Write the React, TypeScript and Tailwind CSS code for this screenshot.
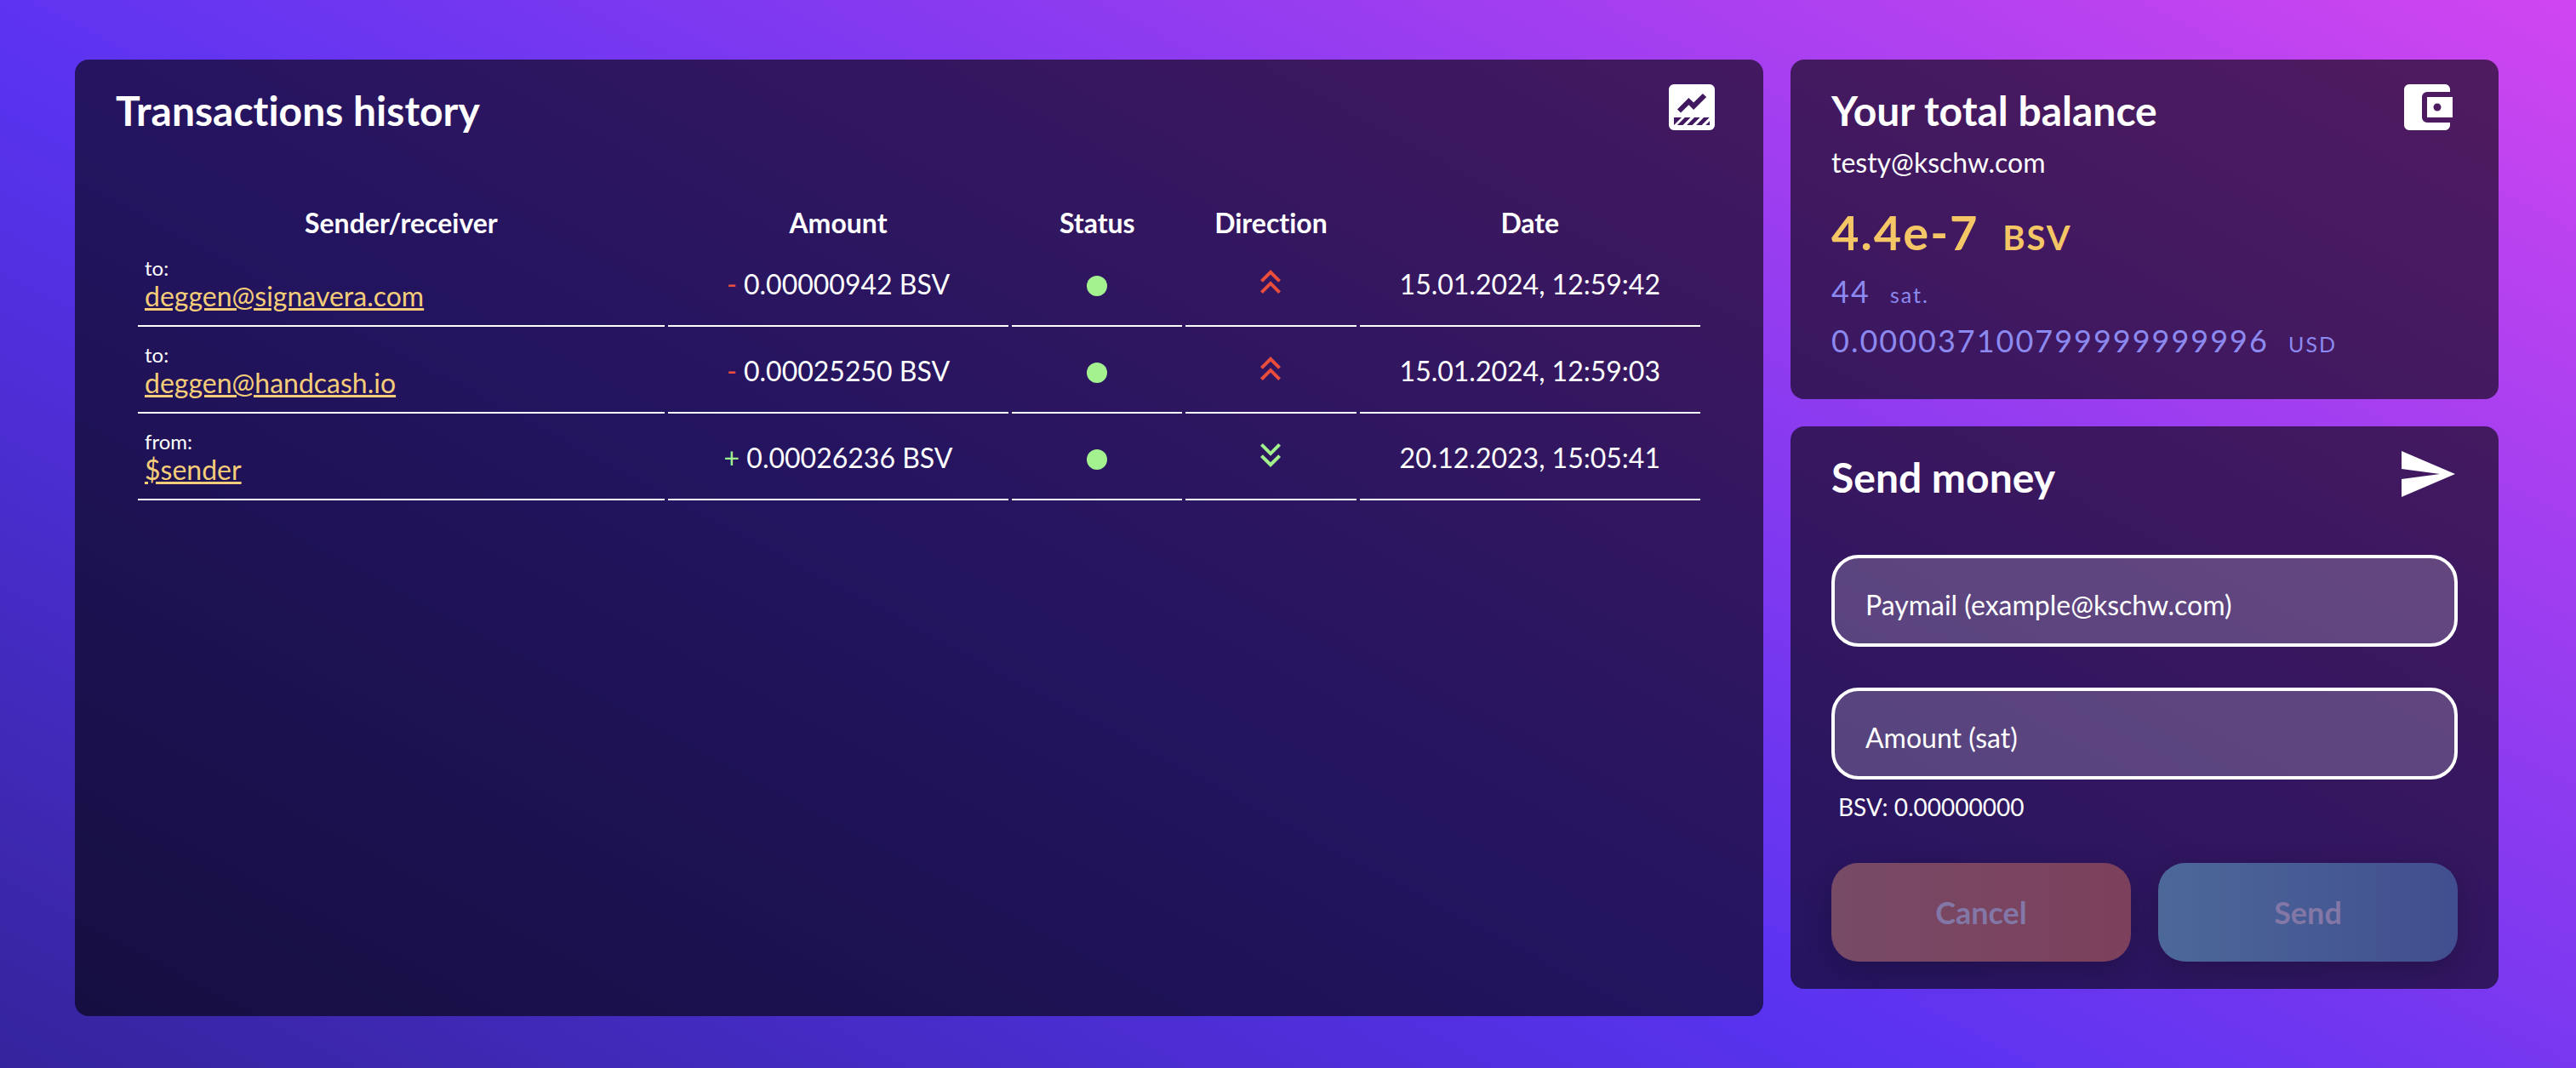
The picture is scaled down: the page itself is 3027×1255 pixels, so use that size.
import type { ReactNode } from "react";
import {
  MdAccountBalanceWallet,
  MdKeyboardDoubleArrowDown,
  MdKeyboardDoubleArrowUp,
} from "react-icons/md";

type Transaction = {
  kind: "to" | "from";
  party: string;
  amount: string;
  date: string;
};

const transactions: Transaction[] = [
  { kind: "to", party: "deggen@signavera.com", amount: "0.00000942", date: "15.01.2024, 12:59:42" },
  { kind: "to", party: "deggen@handcash.io", amount: "0.00025250", date: "15.01.2024, 12:59:03" },
  { kind: "from", party: "$sender", amount: "0.00026236", date: "20.12.2023, 15:05:41" },
];

function ChartIcon() {
  return (
    <svg viewBox="0 0 24 24" className="size-[72px]" fill="currentColor" aria-hidden="true">
      <path
        fillRule="evenodd"
        d="M5 3h14a2 2 0 0 1 2 2v14a2 2 0 0 1-2 2H5a2 2 0 0 1-2-2V5a2 2 0 0 1 2-2z
           M6.3 12.8l4.5-4.5 1.9 1.9 3.6-3.5 1.4 1.3-5 5-1.9-1.9-3.1 3.1z
           M5 16h3L5 19z
           M9.3 16h2.2l-3 3H6.3z
           M13 16h2.2l-3 3H10z
           M16.7 16h2.2l-3 3h-2.2z
           M19 17.4V19h-1.6z"
      />
    </svg>
  );
}

function SendIcon() {
  return (
    <svg viewBox="0 0 24 24" className="size-[72px]" fill="currentColor" aria-hidden="true">
      <path d="M2 3l21 9-21 9v-7l15-2-15-2z" />
    </svg>
  );
}

function Panel({
  title,
  icon,
  className,
  children,
}: {
  title: string;
  icon: ReactNode;
  className: string;
  children: ReactNode;
}) {
  return (
    <section className={`rounded-2xl bg-black/60 px-12 pt-5 ${className}`}>
      <header className="flex h-[78px] items-start justify-between">
        <h2 className="pt-3 text-[48px] leading-[56px] font-bold">{title}</h2>
        {icon}
      </header>
      {children}
    </section>
  );
}

function Field({ label, type }: { label: string; type: string }) {
  return (
    <input
      type={type}
      aria-label={label}
      placeholder={label}
      className="block h-[108px] w-full rounded-[32px] border-4 border-white bg-white/20 px-9 pt-2 text-[32px] text-white placeholder:text-white"
    />
  );
}

function TransactionRow({ tx }: { tx: Transaction }) {
  const outgoing = tx.kind === "to";
  const cell = "border-b-2 border-white p-0 text-center";
  return (
    <tr className="h-[98px]">
      <td className="border-b-2 border-white px-2 pb-4 text-left align-bottom">
        <div className="text-[24px] leading-[30px]">{tx.kind}:</div>
        <a href="#" className="block text-[32px] leading-[36px] text-[#f5cd79] underline">
          {tx.party}
        </a>
      </td>
      <td className={cell}>
        <span className={outgoing ? "text-[#eb4d3d]" : "text-[#a0f08c]"}>{outgoing ? "-" : "+"}</span>{" "}
        {tx.amount} BSV
      </td>
      <td className={cell}>
        <span className="mx-auto mt-1 block size-6 rounded-full bg-[#a3f28f]" role="img" aria-label="Confirmed" />
      </td>
      <td className={cell}>
        {outgoing ? (
          <MdKeyboardDoubleArrowUp className="mx-auto mb-1.5 size-12 text-[#eb4d3d]" />
        ) : (
          <MdKeyboardDoubleArrowDown className="mx-auto mb-1.5 size-12 text-[#a0f08c]" />
        )}
      </td>
      <td className={cell}>{tx.date}</td>
    </tr>
  );
}

export default function App() {
  return (
    <main className="grid min-h-screen grid-cols-[31fr_13fr] items-start gap-8 bg-[linear-gradient(28deg,#34249c_0%,#5933f0_41%,#d046f0_100%)] pt-[70px] pr-[91px] pb-[61px] pl-[88px] font-[Lato,sans-serif] text-white [font-variant-ligatures:none]">
      <Panel title="Transactions history" icon={<ChartIcon />} className="self-stretch">
        <div className="mt-[70px] px-[22px]">
          <table className="w-full table-fixed border-separate border-spacing-1 text-[32px]">
            <colgroup>
              <col className="w-[34%]" />
              <col className="w-[22%]" />
              <col className="w-[11%]" />
              <col className="w-[11%]" />
              <col className="w-[22%]" />
            </colgroup>
            <thead>
              <tr className="h-10 leading-10">
                <th>Sender/receiver</th>
                <th>Amount</th>
                <th>Status</th>
                <th>Direction</th>
                <th>Date</th>
              </tr>
            </thead>
            <tbody>
              {transactions.map((tx) => (
                <TransactionRow key={tx.date} tx={tx} />
              ))}
            </tbody>
          </table>
        </div>
      </Panel>

      <div className="flex flex-col gap-8">
        <Panel title="Your total balance" icon={<MdAccountBalanceWallet className="size-[72px]" />} className="pb-10">
          <p className="text-[32px] leading-[45px]">testy@kschw.com</p>
          <p className="mt-6 text-[56px] leading-[72px] font-bold tracking-[2px] text-[#f5c665]">
            4.4e-7 <span className="ml-3 text-[40px] leading-none">BSV</span>
          </p>
          <p className="mt-1 text-[36px] leading-[58px] tracking-[2px] text-[#8c8af0]">
            44 <span className="ml-3 text-[25px] leading-none">sat.</span>
          </p>
          <p className="text-[36px] leading-[58px] tracking-[2px] text-[#8c8af0]">
            0.000037100799999999996 <span className="ml-3 text-[25px] leading-none">USD</span>
          </p>
        </Panel>

        <Panel title="Send money" icon={<SendIcon />} className="pb-8">
          <form className="mt-[53px]">
            <div className="flex flex-col gap-12">
              <Field label="Paymail (example@kschw.com)" type="email" />
              <Field label="Amount (sat)" type="text" />
            </div>
            <p className="mt-2.5 px-2 text-[28px] leading-[44px]">BSV: 0.00000000</p>
            <div className="mt-11 grid grid-cols-2 gap-8 text-[36px] font-bold">
              <button
                type="button"
                disabled
                className="h-[116px] rounded-[32px] bg-linear-to-r from-[#774a66] to-[#7c405c] text-[#8277a6] shadow-[0_8px_32px_rgba(0,0,0,0.2)]"
              >
                Cancel
              </button>
              <button
                type="submit"
                disabled
                className="h-[116px] rounded-[32px] bg-linear-to-r from-[#4c6899] to-[#414e8f] text-[#8277a6] shadow-[0_8px_32px_rgba(0,0,0,0.2)]"
              >
                Send
              </button>
            </div>
          </form>
        </Panel>
      </div>
    </main>
  );
}
